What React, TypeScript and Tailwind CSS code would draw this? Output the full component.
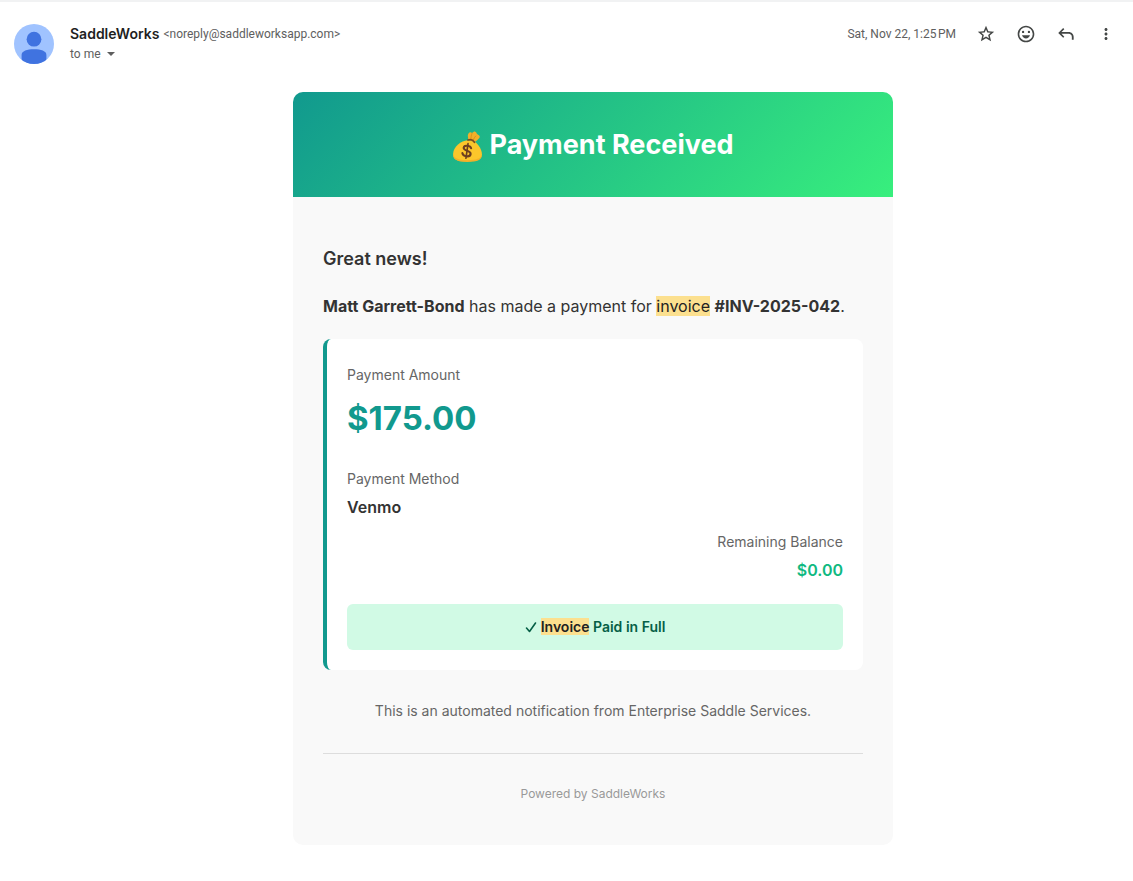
import React from 'react';

const MoneyBag = () => (
  <svg viewBox="0 0 32 32" className="h-[31px] w-[31px] mt-1" role="img" aria-label="Money bag">
    <path d="M17 2.600c1.100-1.600 2.600-1.500 3.700-.5 1-.9 2.200-1.700 3.300-1.400 1.400.5 1.200 1.700 1.900 2.500.7.800 2.300.9 2.700 2.300.4 1.500-1.100 2.700-2.400 3.700-1.100.9-1.900 1.900-3 2.400l-6.400-2.500c.2-2.300-1.300-4.600.2-6.500z" fill="#f3b02a" />
    <path d="M20.700 2.300c-.9 2.300-1.200 4.200-1 6.200M24.600 5.200c-1.300 1.200-2 2.400-2.500 4.100" stroke="#d08a18" strokeWidth=".8" fill="none" strokeLinecap="round" />
    <path d="M16 9.500c-6.500.4-14.600 6.500-14.900 14.200C.9 29.100 4.600 31.300 15.600 31.300S31 29.500 30.900 24.100c-.1-5-3.400-10.300-7.400-13.100z" fill="#fcc62b" />
    <path d="M1.200 23.500c.6 4.600 4.800 6.600 14.400 6.600s14.300-1.500 15.200-5.500c0 5.200-4.100 7.300-15.200 7.300S.9 29.100 1.200 23.500z" fill="#f3b02a" />
    <path d="M16.500 9.300c2.500-1 5.300.1 6.700 2.300" stroke="#7a4a22" strokeWidth="1.800" fill="none" strokeLinecap="round" />
    <g stroke="#6d3f20" fill="none" strokeLinecap="round" transform="rotate(8 15.500 20.500)">
      <path d="M19.300 17.200c-.7-1.500-2.200-2-3.900-2-2.200 0-3.700 1-3.700 2.600 0 3.600 7.900 1.700 7.900 5.400 0 1.800-1.700 2.900-4.100 2.900-2.100 0-3.800-.8-4.400-2.600" strokeWidth="2.200" />
      <path d="M15.500 13v15.200" strokeWidth="1.700" />
    </g>
  </svg>
);

const Avatar = () => (
  <svg viewBox="0 0 40 40" className="h-10 w-10 shrink-0" aria-hidden="true">
    <defs>
      <clipPath id="avatar">
        <circle cx="20" cy="20" r="20" />
      </clipPath>
    </defs>
    <g clipPath="url(#avatar)">
      <rect width="40" height="40" fill="#a0c3ff" />
      <circle cx="20" cy="15.200" r="7.400" fill="#4073e0" />
      <path d="M7.600 40v-9c0-4 5.400-5.700 12.400-5.700s12.400 1.700 12.400 5.700v9z" fill="#4073e0" />
    </g>
  </svg>
);

const actions = [
  {
    label: 'Star',
    path: 'M21.800 9.300l-7-.6L12 2.200 9.200 8.700l-7 .6 5.300 4.600L5.900 20.800 12 17.100l6.100 3.700-1.600-6.900 5.300-4.600zM12 15.100l-3.500 2.100.93-3.970-3.080-2.670 4.060-.35L12 6.460l1.590 3.750 4.060.35-3.080 2.670.93 3.970L12 15.100z',
  },
  {
    label: 'Add reaction',
    path: 'M12 2C6.480 2 2 6.480 2 12s4.480 10 10 10 10-4.480 10-10S17.520 2 12 2zm0 18.100a8.100 8.100 0 110-16.200 8.100 8.100 0 010 16.200zM8.500 10.900a1.400 1.400 0 100-2.800 1.400 1.400 0 000 2.800zm7 0a1.400 1.400 0 100-2.800 1.400 1.400 0 000 2.800zM7.200 13.500c.7 2.300 2.500 3.800 4.800 3.800s4.100-1.500 4.800-3.800z',
  },
  {
    label: 'Reply',
    path: 'M19 19v-3.500c0-2.100-1.600-3.700-3.700-3.700H6.600l3.400 3.400-1.400 1.400L2.700 10.700l5.900-5.900L10 6.200 6.600 9.600h8.700c3.300 0 5.900 2.600 5.900 5.900V19z',
  },
  {
    label: 'More',
    path: 'M12 8c1.100 0 2-.9 2-2s-.9-2-2-2-2 .9-2 2 .9 2 2 2zm0 2c-1.100 0-2 .9-2 2s.9 2 2 2 2-.9 2-2-.9-2-2-2zm0 6c-1.100 0-2 .9-2 2s.9 2 2 2 2-.9 2-2-.9-2-2-2z',
  },
];

const App = () => {
  return (
    <div className="min-h-screen bg-white border-t-2 border-[#f1f2f3] font-['Inter',sans-serif] text-[#333333]">
      {/* Sender row */}
      <header className="flex items-start justify-between pl-3.5 pr-[7px] pt-3">
        <div className="flex items-start gap-4 pt-2.5">
          <Avatar />
          <div className="text-xs text-[#5e5e5e]">
            <div className="flex items-center gap-1 h-5 font-['Roboto',sans-serif]">
              <span className="font-['Inter',sans-serif] text-sm font-semibold text-[#1f1f1f]">SaddleWorks</span>
              <span>&lt;noreply@saddleworksapp.com&gt;</span>
            </div>
            <button className="flex items-center gap-1.5 h-5 font-['Roboto',sans-serif]">
              to me
              <svg viewBox="0 0 8 4" className="h-1 w-2" aria-hidden="true">
                <path d="M0 0h8L4 4z" fill="#5e5e5e" />
              </svg>
            </button>
          </div>
        </div>
        <div className="flex items-center h-10">
          <span className="mr-2.5 text-xs font-['Roboto',sans-serif] text-[#5e5e5e]">Sat, Nov 22, 1:25{'\u202f'}PM</span>
          {actions.map((action) => (
            <button key={action.label} aria-label={action.label} className="flex items-center justify-center w-10 h-10">
              <svg viewBox="0 0 24 24" fill="#444746" className={action.label === 'More' ? 'h-[18px] w-[18px]' : 'h-5 w-5'}>
                <path d={action.path} />
              </svg>
            </button>
          ))}
        </div>
      </header>

      {/* Email body */}
      <main className="pl-[70px] pr-[17px] pt-7 pb-9">
        <div className="max-w-[600px] mx-auto rounded-[10px] overflow-hidden bg-[#f9f9f9]">
          <div className="flex items-center justify-center gap-1.5 py-[30px] bg-[linear-gradient(135deg,#11998e_0%,#38ef7d_100%)]">
            <MoneyBag />
            <h1 className="text-[27px] leading-[45px] font-bold text-white">Payment Received</h1>
          </div>

          <div className="px-[30px] pt-12 pb-[41px]">
            <p className="text-lg leading-7 font-semibold">Great news!</p>
            <p className="mt-5 text-base leading-[26px]">
              <strong>Matt Garrett-Bond</strong> has made a payment for{' '}
              <mark className="bg-[#fce08f] text-[#222222]">invoice</mark> <strong>#INV-2025-042</strong>.
            </p>

            <div className="mt-5 p-5 pt-6 rounded-lg border-l-4 border-[#11998e] bg-white">
              <p className="text-sm leading-6 text-[#666666]">Payment Amount</p>
              <p className="mt-1 text-[33px] leading-[54px] font-bold text-[#11998e]">$175.00</p>
              <p className="mt-[22px] text-sm leading-6 text-[#666666]">Payment Method</p>
              <p className="mt-1 text-base leading-6 font-semibold">Venmo</p>
              <div className="mt-[11px] text-right">
                <p className="text-sm leading-6 text-[#666666]">Remaining Balance</p>
                <p className="mt-1 text-base leading-6 font-semibold text-[#10b981]">$0.00</p>
              </div>
              <div className="flex items-center justify-center gap-1 mt-[22px] py-3 rounded-md bg-[#d1fae5] text-sm leading-[22px] font-semibold text-[#065f46]">
                <svg viewBox="0 0 12 12" className="h-3 w-3" fill="none" stroke="currentColor" strokeWidth="1.600" strokeLinecap="round" strokeLinejoin="round" aria-hidden="true">
                  <path d="M1.500 7l3 3.500L10.500 2" />
                </svg>
                <p>
                  <mark className="bg-[#fce08f] text-[#222222]">Invoice</mark> Paid in Full
                </p>
              </div>
            </div>

            <p className="mt-[30px] text-center text-sm leading-[22px] text-[#666666]">
              This is an automated notification from Enterprise Saddle Services.
            </p>
            <hr className="mt-[31px] border-[#dddddd]" />
            <p className="mt-[30px] text-center text-xs leading-5 text-[#999999]">Powered by SaddleWorks</p>
          </div>
        </div>
      </main>
    </div>
  );
};

export default App;
